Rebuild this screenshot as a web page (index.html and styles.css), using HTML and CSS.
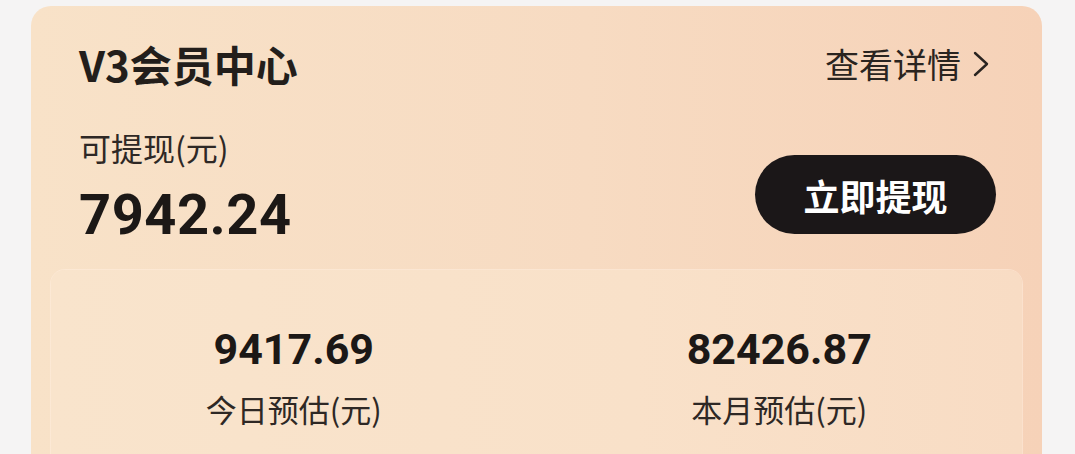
FILE: index.html
```html
<!DOCTYPE html>
<html lang="zh-CN">
<head>
<meta charset="utf-8">
<title>V3会员中心</title>
<link rel="stylesheet" href="styles.css">
</head>
<body>
<div class="page">
  <section class="card">
    <div class="card-head">
      <h1 class="title">V3会员中心</h1>
      <a class="more">查看详情<svg class="chev" viewBox="0 0 18 26" width="18" height="26"><path d="M3 2 L15 13 L3 24" fill="none" stroke="#2a2420" stroke-width="2.4" stroke-linecap="round" stroke-linejoin="round"/></svg></a>
    </div>
    <div class="balance">
      <div class="balance-info">
        <div class="balance-label">可提现(元)</div>
        <div class="balance-amount">7942.24</div>
      </div>
      <button class="withdraw">立即提现</button>
    </div>
    <div class="stats">
      <div class="stat">
        <div class="stat-value">9417.69</div>
        <div class="stat-label">今日预估(元)</div>
      </div>
      <div class="stat">
        <div class="stat-value">82426.87</div>
        <div class="stat-label">本月预估(元)</div>
      </div>
    </div>
  </section>
</div>
</body>
</html>
```
FILE: styles.css
```css
* { box-sizing: border-box; }
html, body { margin: 0; padding: 0; }
body {
  background: #f5f4f4;
  font-family: "Roboto", "Noto Sans CJK SC", sans-serif;
  color: #231e1b;
  overflow: hidden;
}
.page {
  padding: 6px 0 0 31px;
}
.card {
  width: 1011px;
  min-height: 480px;
  border-radius: 20px;
  background: linear-gradient(90deg, #f8e2c8 0%, #f7dbc2 55%, #f6d2b8 100%);
  padding: 0 20px;
}
.card-head {
  display: flex;
  justify-content: space-between;
  align-items: center;
  padding: 34px 32px 0 28px;
}
.title {
  margin: 0;
  font-size: 42px;
  line-height: 48px;
  font-weight: 700;
  font-family: "Noto Sans CJK SC", sans-serif;
  color: #231e1b;
}
.more {
  display: flex;
  align-items: center;
  gap: 11px;
  font-size: 34px;
  line-height: 40px;
  font-family: "Noto Sans CJK SC", sans-serif;
  color: #2a2420;
}
.chev { display: block; }
.balance {
  display: flex;
  justify-content: space-between;
  align-items: flex-start;
  padding: 39px 26px 0 28px;
}
.balance-label {
  font-size: 32px;
  line-height: 40px;
  font-family: "Noto Sans CJK SC", sans-serif;
  color: #2e2825;
  margin-bottom: 16px;
}
.balance-amount {
  font-size: 56px;
  line-height: 64px;
  font-weight: 700;
  color: #1c1816;
  letter-spacing: 0.5px;
}
.withdraw {
  width: 241px;
  height: 79px;
  border: 0;
  border-radius: 40px;
  background: #1b1718;
  color: #ffffff;
  font-size: 36px;
  font-weight: 700;
  font-family: "Noto Sans CJK SC", sans-serif;
  margin-top: 28px;
}
.stats {
  display: grid;
  grid-template-columns: 1fr 1fr;
  margin-top: 23px;
  min-height: 220px;
  border-radius: 14px;
  background: linear-gradient(90deg, #f9e4cc 0%, #f9e1c9 60%, #f8dcc4 100%);
  box-shadow: 0 0 0 1px rgba(255, 240, 225, 0.5);
  padding-top: 54px;
}
.stat {
  display: flex;
  flex-direction: column;
  align-items: center;
}
.stat-value {
  font-size: 43px;
  line-height: 50px;
  font-weight: 700;
  color: #1c1816;
}
.stat-label {
  margin-top: 16px;
  font-size: 31px;
  line-height: 38px;
  font-family: "Noto Sans CJK SC", sans-serif;
  color: #2e2825;
}
```
